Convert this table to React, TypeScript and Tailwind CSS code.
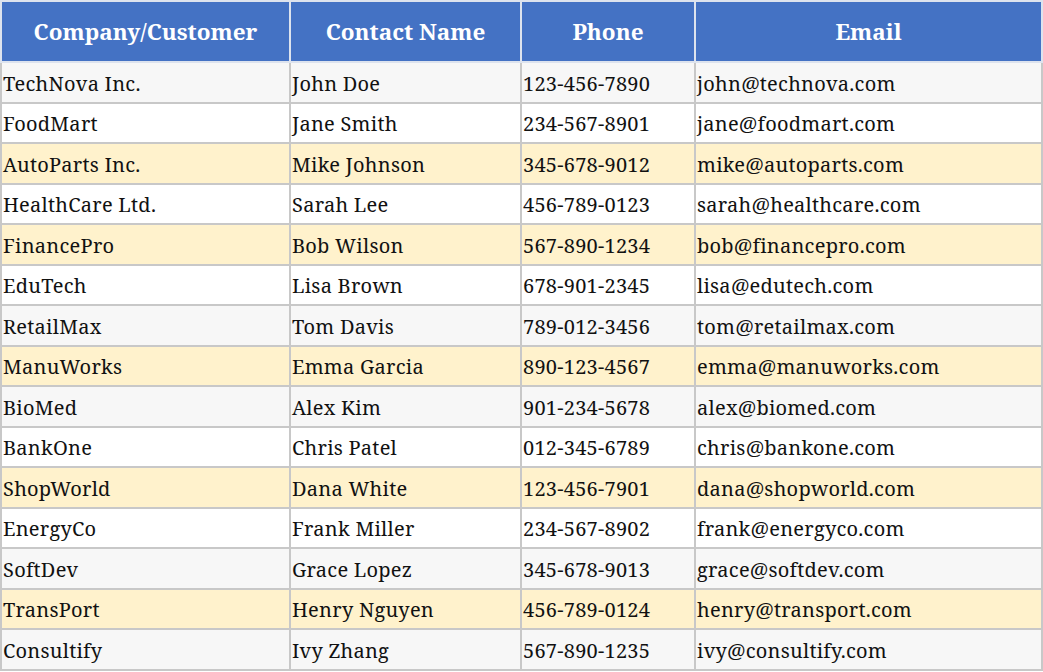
import React from "react"

const rows = [
  ["TechNova Inc.", "John Doe", "123-456-7890", "john@technova.com", false],
  ["FoodMart", "Jane Smith", "234-567-8901", "jane@foodmart.com", false],
  ["AutoParts Inc.", "Mike Johnson", "345-678-9012", "mike@autoparts.com", true],
  ["HealthCare Ltd.", "Sarah Lee", "456-789-0123", "sarah@healthcare.com", false],
  ["FinancePro", "Bob Wilson", "567-890-1234", "bob@financepro.com", true],
  ["EduTech", "Lisa Brown", "678-901-2345", "lisa@edutech.com", false],
  ["RetailMax", "Tom Davis", "789-012-3456", "tom@retailmax.com", false],
  ["ManuWorks", "Emma Garcia", "890-123-4567", "emma@manuworks.com", true],
  ["BioMed", "Alex Kim", "901-234-5678", "alex@biomed.com", false],
  ["BankOne", "Chris Patel", "012-345-6789", "chris@bankone.com", false],
  ["ShopWorld", "Dana White", "123-456-7901", "dana@shopworld.com", true],
  ["EnergyCo", "Frank Miller", "234-567-8902", "frank@energyco.com", false],
  ["SoftDev", "Grace Lopez", "345-678-9013", "grace@softdev.com", false],
  ["TransPort", "Henry Nguyen", "456-789-0124", "henry@transport.com", true],
  ["Consultify", "Ivy Zhang", "567-890-1235", "ivy@consultify.com", false],
] as const

const headers = ["Company/Customer", "Contact Name", "Phone", "Email"]

export default function App() {
  return (
    <div className="bg-white" style={{ fontFamily: '"Noto Serif", "DejaVu Serif", serif' }}>
      <table className="w-[1041px] border-collapse border-2 border-[#c8c8c8] table-fixed">
        <colgroup>
          <col className="w-[289px]" />
          <col className="w-[231px]" />
          <col className="w-[174px]" />
          <col className="w-[347px]" />
        </colgroup>
        <thead>
          <tr className="h-[61px] bg-[#4472c4]">
            {headers.map((h) => (
              <th key={h} className="border-2 border-[#dde3ee] text-white font-bold text-[22.5px] text-center">
                {h}
              </th>
            ))}
          </tr>
        </thead>
        <tbody>
          {rows.map((r, i) => {
            const bg = r[4] ? "bg-[#fff2cc]" : i % 2 === 0 ? "bg-[#f7f7f7]" : "bg-white"
            return (
              <tr key={r[0]} className={`h-[40.5px] ${bg}`}>
                {r.slice(0, 4).map((c, j) => (
                  <td key={j} className="border-2 border-[#c8c8c8] px-[1px] pt-[3px] text-[20px] tracking-[0.25px] text-[#111] whitespace-nowrap">
                    {c}
                  </td>
                ))}
              </tr>
            )
          })}
        </tbody>
      </table>
    </div>
  )
}
